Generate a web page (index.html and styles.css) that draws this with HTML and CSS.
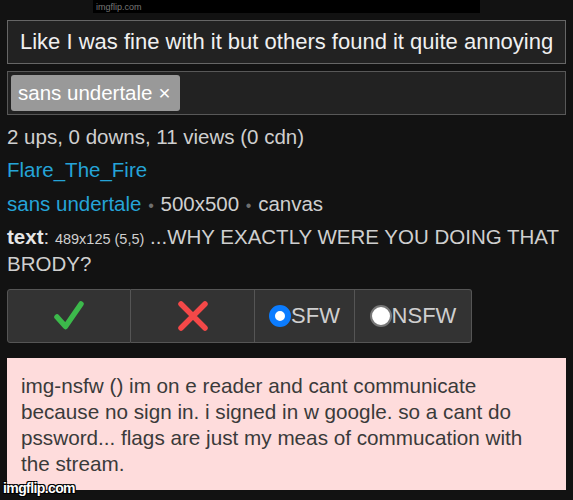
FILE: index.html
```html
<!DOCTYPE html>
<html lang="en">
<head>
  <meta charset="UTF-8">
  <meta name="viewport" content="width=device-width, initial-scale=1.0">
  <title>Meme Review</title>
  <link rel="stylesheet" href="styles.css">
</head>
<body>
  <div class="meme-img">
    <span class="meme-mark">imgflip.com</span>
  </div>

  <div class="title-box">Like I was fine with it but others found it quite annoying</div>

  <div class="tag-box">
    <span class="tag">sans undertale <span class="tag-x">×</span></span>
  </div>

  <div class="info">
    <div class="info-line">2 ups, 0 downs, 11 views (0 cdn)</div>
    <div class="info-line"><a class="link" href="#">Flare_The_Fire</a></div>
    <div class="info-line">
      <a class="link" href="#">sans undertale</a>
      <span class="dot">•</span> 500x500 <span class="dot">•</span> canvas
    </div>
  </div>
  <div class="text-line">
    <b>text</b>: <span class="small">489x125 (5,5)</span> ...WHY EXACTLY WERE YOU DOING THAT BRODY?
  </div>

  <div class="actions">
    <button class="act-btn approve" type="button">
      <svg width="30" height="30" viewBox="0 0 30 30">
        <path d="M3 16 L11.5 25.5 L27 3" fill="none" stroke="#3cb94b" stroke-width="5.5" stroke-linecap="round" stroke-linejoin="round"/>
      </svg>
    </button>
    <button class="act-btn disapprove" type="button">
      <svg width="30" height="30" viewBox="0 0 30 30">
        <path d="M3 3 L27 27 M27 3 L3 27" fill="none" stroke="#f44848" stroke-width="5.5" stroke-linecap="round"/>
      </svg>
    </button>
    <label class="act-btn radio-btn sfw"><span class="radio on"></span>SFW</label>
    <label class="act-btn radio-btn nsfw"><span class="radio"></span>NSFW</label>
  </div>

  <div class="flag-note">
    img-nsfw () im on e reader and cant communicate because no sign in. i signed in w google. so a cant do pssword... flags are just my meas of commucation with the stream.
  </div>

  <span class="watermark">imgflip.com</span>
</body>
</html>
```

FILE: styles.css
```css
body {
  margin: 0;
  padding: 0 7px;
  background-color: #121212;
  font-family: "Liberation Sans", Arial, sans-serif;
  font-size: 20.5px;
  color: #cfcfcf;
  height: 500px;
  overflow: hidden;
  position: relative;
}
.meme-img {
  width: 387px;
  height: 13px;
  margin: 0 auto;
  background-color: #000;
  display: flex;
  align-items: center;
}
.meme-mark {
  font-size: 9px;
  color: #777;
  padding-left: 3px;
}
.title-box {
  margin-top: 7px;
  height: 42px;
  border: 1px solid #666;
  background-color: #222;
  color: #f0f0f0;
  font-size: 22px;
  padding-left: 12px;
  display: flex;
  align-items: center;
}
.tag-box {
  margin-top: 7px;
  height: 42px;
  border: 1px solid #585858;
  background-color: #222;
  display: flex;
  align-items: center;
  padding-left: 3px;
}
.tag {
  background-color: #999;
  color: #fff;
  border-radius: 3px;
  height: 36px;
  width: 169px;
  box-sizing: border-box;
  padding-left: 7px;
  display: flex;
  align-items: center;
}
.tag-x {
  margin-left: 6px;
}
.info {
  margin-top: 5px;
}
.info-line {
  line-height: 33.3px;
}
.link {
  color: #25a4d8;
  text-decoration: none;
}
.dot {
  color: #6f6f6f;
  font-size: 16px;
  line-height: 1;
  padding: 0 1px;
}
.text-line {
  margin-top: 3px;
  line-height: 27px;
}
.text-line b {
  color: #e6e6e6;
}
.small {
  font-size: 14.5px;
  line-height: 1;
}
.actions {
  display: flex;
  margin-top: 12px;
}
.act-btn {
  height: 54px;
  box-sizing: border-box;
  background-color: #333;
  border: 1px solid #555;
  border-radius: 0;
  display: flex;
  align-items: center;
  justify-content: center;
  padding: 0;
  font-family: inherit;
  cursor: pointer;
}
.approve {
  width: 124px;
  border-radius: 3px 0 0 3px;
}
.disapprove {
  width: 124px;
  border-left: none;
}
.radio-btn {
  width: 100px;
  border-left: none;
  font-size: 22px;
  color: #cfcfcf;
}
.nsfw {
  width: 117px;
  border-radius: 0 3px 3px 0;
}
.radio {
  width: 22px;
  height: 22px;
  box-sizing: border-box;
  border-radius: 50%;
  background-color: #fff;
  border: 2px solid #777;
}
.radio.on {
  background-color: #fff;
  border: 6.5px solid #0b7cff;
}
.flag-note {
  margin-top: 15px;
  background-color: #fedcdc;
  color: #3a3a3a;
  font-size: 20.7px;
  line-height: 26px;
  padding: 15px 14px 13px 14px;
  height: 104px;
}
.watermark {
  position: absolute;
  left: 3px;
  top: 480px;
  font-size: 14px;
  font-weight: bold;
  color: #fff;
  letter-spacing: -0.6px;
  text-shadow: 1px 1px 0 #000, -1px -1px 0 #000, 1px -1px 0 #000, -1px 1px 0 #000;
}
```
